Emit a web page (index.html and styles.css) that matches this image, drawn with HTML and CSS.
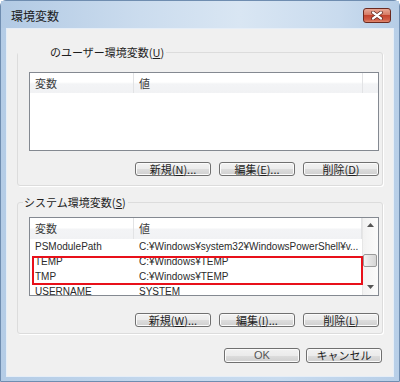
FILE: index.html
```html
<!DOCTYPE html>
<html>

<head>
    <meta http-equiv="Content-Type" content="text/html;charset=UTF-8" />
    <title>環境変数</title>
    <link rel="stylesheet" href="styles.css">
</head>

<body>
    <div class="window">
        <div class="titlebar">
            <span class="title">環境変数</span>
            <div class="close_btn">
                <svg width="12" height="9" viewBox="0 0 12 9">
                    <path d="M2 1.5 L10 7.5 M10 1.5 L2 7.5" stroke="#5a2018" stroke-width="3.6" stroke-linecap="round" />
                    <path d="M2 1.5 L10 7.5 M10 1.5 L2 7.5" stroke="#fff" stroke-width="2.2" stroke-linecap="round" />
                </svg>
            </div>
        </div>
        <div class="client">
            <fieldset class="group group_user">
                <legend><span class="blank"></span>のユーザー環境変数(<u>U</u>)</legend>
                <div class="listview">
                    <div class="lv_main">
                        <div class="lv_head">
                            <div class="cell">変数</div>
                            <div class="cell">値</div>
                            <div class="cell fill"></div>
                        </div>
                    </div>
                </div>
                <div class="btn_row">
                    <div class="btn">新規(<u>N</u>)...</div>
                    <div class="btn">編集(<u>E</u>)...</div>
                    <div class="btn">削除(<u>D</u>)</div>
                </div>
            </fieldset>

            <fieldset class="group group_system">
                <legend>システム環境変数(<u>S</u>)</legend>
                <div class="listview lv_system">
                    <div class="lv_main">
                        <div class="lv_head">
                            <div class="cell">変数</div>
                            <div class="cell">値</div>
                        </div>
                        <div class="lv_row">
                            <div class="cell">PSModulePath</div>
                            <div class="cell">C:¥Windows¥system32¥WindowsPowerShell¥v...</div>
                        </div>
                        <div class="lv_row">
                            <div class="cell">TEMP</div>
                            <div class="cell">C:¥Windows¥TEMP</div>
                        </div>
                        <div class="lv_row">
                            <div class="cell">TMP</div>
                            <div class="cell">C:¥Windows¥TEMP</div>
                        </div>
                        <div class="lv_row">
                            <div class="cell">USERNAME</div>
                            <div class="cell">SYSTEM</div>
                        </div>
                    </div>
                    <div class="vscroll">
                        <div class="arrow arrow_up">
                            <svg width="7" height="4" viewBox="0 0 7 4"><path d="M0 4 L3.5 0 L7 4 Z" fill="#555" /></svg>
                        </div>
                        <div class="track"><div class="thumb"></div></div>
                        <div class="arrow arrow_down">
                            <svg width="7" height="4" viewBox="0 0 7 4"><path d="M0 0 L7 0 L3.5 4 Z" fill="#555" /></svg>
                        </div>
                    </div>
                    <div class="mark"></div>
                </div>
                <div class="btn_row btn_row_system">
                    <div class="btn">新規(<u>W</u>)...</div>
                    <div class="btn">編集(<u>I</u>)...</div>
                    <div class="btn">削除(<u>L</u>)</div>
                </div>
            </fieldset>

            <div class="dialog_btns">
                <div class="btn btn_ok">OK</div>
                <div class="btn btn_cancel">キャンセル</div>
            </div>
        </div>
    </div>
</body>

</html>
```

FILE: styles.css
```css
* {
    margin: 0;
    padding: 0;
    box-sizing: border-box;
}

html,
body {
    width: 400px;
    height: 382px;
    overflow: hidden;
}

body {
    font-family: "Liberation Sans", "Noto Sans CJK JP", sans-serif;
    font-size: 11px;
    color: #1e1e1e;
    background: #fff;
}

u {
    text-decoration: underline;
}

/* window frame */
.window {
    height: 382px;
    display: flex;
    flex-direction: column;
    background: linear-gradient(90deg, #b4cce6 0%, #c4d8ed 40%, #c8dbef 70%, #b8cfe8 100%);
    border: 1px solid #6f8db0;
    border-radius: 6px 6px 0 0;
}

.titlebar {
    height: 27px;
    display: flex;
    background: linear-gradient(90deg, #b2cae4 0%, #cbdcee 35%, #d9e6f3 60%, #c9dbee 85%, #b6cde6 100%);
}

.title {
    margin: 6px 0 0 10px;
    line-height: 18px;
    font-family: "Noto Sans CJK JP", sans-serif;
    font-size: 12px;
    color: #1b1b1b;
}

.close_btn {
    margin: 7px 8px 0 auto;
    width: 28px;
    height: 15px;
    border: 1px solid #6b2a20;
    border-radius: 3px;
    background: linear-gradient(#e9a896 0%, #d67a64 45%, #c4452f 50%, #cf5a44 80%, #e08a70 100%);
    display: flex;
    align-items: center;
    justify-content: center;
}

.client {
    flex: 1;
    margin: 0 5px 4px 5px;
    background: #f0f0f0;
    border: 1px solid #e6eef7;
}

/* group boxes */
.group {
    margin-left: 10px;
    width: 366px;
    border: 1px solid #dcdcdc;
    border-radius: 3px;
    box-shadow: 1px 1px 0 #fff;
    padding: 12px 3px 9px 11px;
    min-width: 0;
}

.group legend {
    line-height: 15px;
    font-family: "Noto Sans CJK JP", sans-serif;
    font-size: 11px;
    color: #1e1e1e;
    background: #f0f0f0;
    padding: 0 2px 0 0;
}

.group_user {
    margin-top: 16px;
}

.group_user legend {
    margin-left: -11px;
}

.group_user .blank {
    display: inline-block;
    width: 32px;
}

.group_system {
    margin-top: 9px;
    padding-top: 7px;
    padding-bottom: 6px;
}

.group_system legend {
    margin-left: -6px;
    padding-left: 1px;
}

/* list views */
.listview {
    height: 79px;
    border: 1px solid #848991;
    background: #fff;
    display: flex;
    position: relative;
}

.lv_main {
    flex: 1;
    overflow: hidden;
}

.lv_head,
.lv_row {
    display: grid;
    grid-template-columns: 104px 229px 1fr;
}

.lv_system .lv_head,
.lv_system .lv_row {
    grid-template-columns: 104px 1fr;
}

.lv_head {
    height: 20px;
    background: linear-gradient(#fff 0%, #fff 45%, #f3f4f6 55%, #f1f2f4 100%);
}

.lv_system .lv_head {
    height: 21px;
}

.lv_head .cell {
    padding-left: 5px;
    line-height: 20px;
    font-family: "Noto Sans CJK JP", sans-serif;
    font-size: 11px;
    color: #3c3c3c;
    border-right: 1px solid #e2e3e5;
}

.lv_head .fill {
    border-right: none;
}

.lv_row {
    height: 15px;
}

.lv_row .cell {
    padding-left: 5px;
    line-height: 15px;
    font-size: 10px;
    color: #2b2b2b;
    white-space: nowrap;
    overflow: hidden;
}

.vscroll {
    width: 16px;
    display: flex;
    flex-direction: column;
    background: linear-gradient(90deg, #f2f2f2, #fbfbfb);
    border-left: 1px solid #e6e6e6;
}

.arrow {
    display: flex;
    justify-content: center;
    align-items: center;
}

.arrow_up {
    height: 13px;
}

.arrow_down {
    height: 17px;
}

.track {
    flex: 1;
    padding-top: 23px;
}

.thumb {
    width: 14px;
    height: 13px;
    border: 1px solid #9a9a9a;
    border-radius: 2px;
    background: linear-gradient(90deg, #f4f4f4, #e3e3e3 50%, #d6d6d6);
}

.mark {
    position: absolute;
    left: 2px;
    top: 38px;
    width: 331px;
    height: 29px;
    border: 2px solid #e8101a;
}

/* buttons */
.btn_row {
    margin-top: 11px;
    display: flex;
    justify-content: flex-end;
    gap: 8px;
}

.btn_row_system {
    margin-top: 17px;
}

.btn {
    width: 76px;
    height: 14px;
    border: 1px solid #707070;
    border-radius: 3px;
    background: linear-gradient(#f2f2f2 0%, #ebebeb 50%, #dddddd 51%, #cfcfcf 100%);
    box-shadow: inset 0 0 0 1px #fbfbfb;
    font-family: "Noto Sans CJK JP", sans-serif;
    font-size: 11px;
    line-height: 12px;
    text-align: center;
    color: #1e1e1e;
}

.dialog_btns {
    margin-top: 14px;
    padding-right: 11px;
    display: flex;
    justify-content: flex-end;
    gap: 6px;
}

.dialog_btns .btn {
    height: 15px;
    line-height: 13px;
}

.btn_ok {
    font-family: "Liberation Sans", sans-serif;
    color: #555;
}
```
